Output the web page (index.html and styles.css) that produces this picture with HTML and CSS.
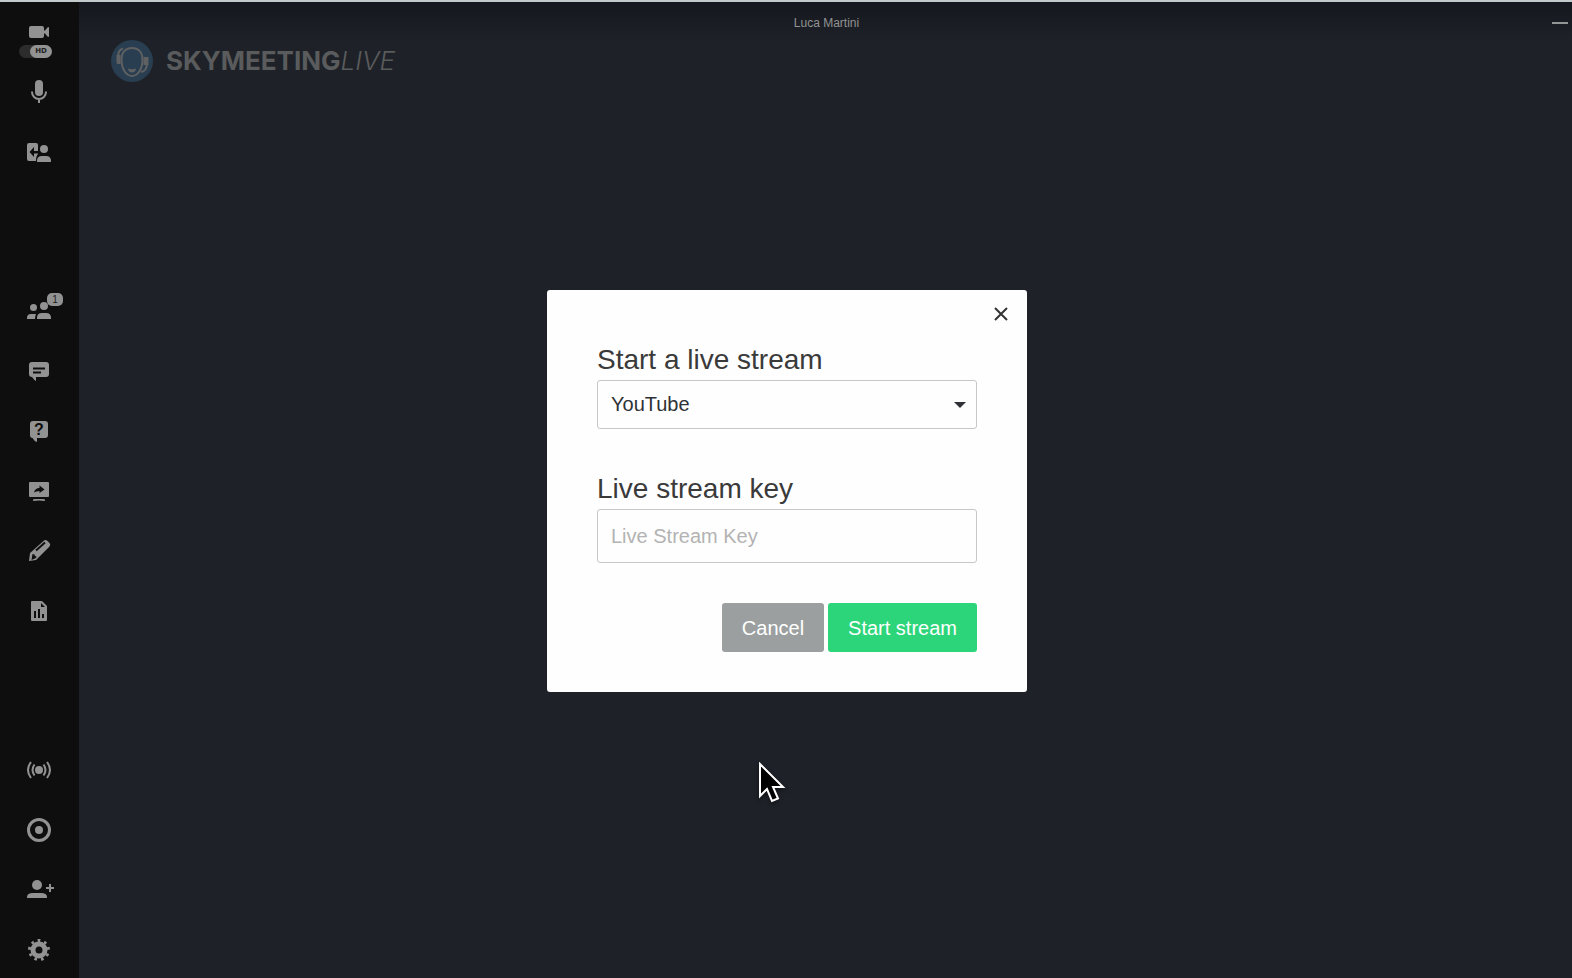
FILE: index.html
```
<!DOCTYPE html>
<html lang="en">
<head>
 <meta charset="utf-8">
 <title>SkymeetingLive</title>
 <link rel="stylesheet" href="styles.css">
</head>
<body>
 <nav class="sidebar">
  <div class="group">
   <button class="tool camera" aria-label="Camera">
    <svg width="20" height="12" viewBox="0 0 20 12"><rect width="15" height="12" rx="2"/><path d="M14 4.5h2L18.5 1.5Q20 .5 20 2v8q0 1.5-1.5.5L16 7.5h-2z"/></svg>
    <span class="hd"><span class="knob">HD</span></span>
   </button>
   <button class="tool" aria-label="Microphone">
    <svg class="icon" viewBox="0 0 30 30"><rect x="11" y="3" width="8" height="16" rx="4"/><path class="line" d="M8 14.5v.5a7 7 0 0 0 14 0v-.5M15 22v4"/></svg>
   </button>
   <button class="tool" aria-label="Leave">
    <svg class="icon" viewBox="0 0 30 30"><path d="M5 6h7q2 0 2 2v9q-2 2-2 7H5q-2 0-2-2V8q0-2 2-2z"/><path class="cut" d="M5.5 15l4.5-5v4h4v2.5h-4V20z"/><circle cx="20" cy="12" r="4"/><path d="M13 25v-1q0-5 5-5h4q5 0 5 5v1z"/></svg>
   </button>
  </div>
  <div class="group">
   <button class="tool" aria-label="Participants">
    <svg class="icon" viewBox="0 0 30 30"><circle cx="9.5" cy="11.5" r="3.5"/><circle cx="20" cy="10" r="4"/><path d="M3 23v-1q0-4 4-4h5q-1 2-1 5z"/><path d="M13 23v-1q0-5 5-5h4q5 0 5 5v1z"/></svg>
    <span class="badge">1</span>
   </button>
   <button class="tool" aria-label="Chat">
    <svg class="icon" viewBox="0 0 30 30"><path d="M8 6h14q3 0 3 3v9q0 3-3 3H12v4q-2-1-4-4-3 0-3-3V9q0-3 3-3z"/><path class="cut" d="M9 11.5h12v2H9zM9 15.5h8v2H9z"/></svg>
   </button>
   <button class="tool" aria-label="Questions">
    <svg class="icon" viewBox="0 0 30 30"><path d="M9 5h12q3 0 3 3v11q0 3-3 3h-8v4q-3-1-4.5-4Q6 22 6 19V8q0-3 3-3z"/><text class="mark" x="15" y="19">?</text></svg>
   </button>
   <button class="tool" aria-label="Share screen">
    <svg class="icon" viewBox="0 0 30 30"><rect x="5" y="6" width="20" height="15" rx="1"/><path class="cut" d="M10 16.500q1-4.500 5.500-4.500V9.500l5 4-5 3.500v-2q-3.500 0-5.500 1.500z"/><path d="M9 24q0-1 2-1h8q2 0 2 1v1q-6-1-12 0z"/></svg>
   </button>
   <button class="tool" aria-label="Draw">
    <svg class="icon" viewBox="0 0 30 30"><path d="M5 25l1-8L19.5 5q2-2 4 0l2 2q1.500 1.500 0 3.500L12 24z"/><path class="slot" d="M12 14.500l9-8"/><path class="cut" d="M8.5 18l2 .5.5 1.500 1.500.5-.5 1.500-4.500 2z"/></svg>
   </button>
   <button class="tool" aria-label="Polls">
    <svg class="icon" viewBox="0 0 30 30"><path d="M8 5h10l5 5v14q0 1-1 1H8q-1 0-1-1V6q0-1 1-1z"/><path class="cut" d="M17 7l4 4h-4zM10 15h2v7h-2zM14 13h2v9h-2zM18 18h2v4h-2z"/></svg>
   </button>
  </div>
  <div class="group">
   <button class="tool" aria-label="Live stream">
    <svg class="icon" viewBox="0 0 30 30"><circle cx="15" cy="15" r="4"/><path class="line" d="M10.5 9.5q-4 5.500 0 11M19.5 9.5q4 5.500 0 11M7 7q-6 8 0 16M23 7q6 8 0 16"/></svg>
   </button>
   <button class="tool" aria-label="Record">
    <svg class="icon" viewBox="0 0 30 30"><circle class="ring" cx="15" cy="15" r="10.5"/><circle cx="15" cy="15" r="4"/></svg>
   </button>
   <button class="tool" aria-label="Invite">
    <svg class="icon" viewBox="0 0 30 30"><circle cx="13" cy="10" r="5"/><path d="M3 23v-1q0-4 6-4h8q6 0 6 4v1z"/><path class="line" d="M22 13h8M26 9v8"/></svg>
   </button>
   <button class="tool last" aria-label="Settings">
    <svg class="icon" viewBox="0 0 30 30"><circle class="gear" cx="15" cy="16" r="6"/><circle class="teeth" cx="15" cy="16" r="9.5" pathLength="18" transform="rotate(-98 15 16)"/></svg>
   </button>
  </div>
 </nav>
 <main class="stage">
  <header class="topbar">
   <span class="name">Luca Martini</span>
   <button class="minimize" aria-label="Minimize"></button>
  </header>
  <div class="logo">
   <svg width="42" height="42" viewBox="0 0 42 42">
    <circle class="disc" cx="21" cy="21" r="21"/>
    <path class="face" d="M21 8c-7 0-10.5 5-10.5 11.5C10.5 29 15 36 21 36s10.5-7 10.5-16.5C31.5 13 28 8 21 8z"/>
    <path class="thin" d="M7 17q0-7 5-8.500M36 17v6q0 8-6 9"/>
    <path class="part" d="M5.5 15h4v9H7q-1.500 0-1.500-1.500zM32.5 17h5v8h-5zM17 28.500q4 1.500 8 0-.5 4-4 4t-4-4z"/>
   </svg>
   <span class="brand">SKYMEETING<i>LIVE</i></span>
  </div>
 </main>
 <div class="overlay">
  <form class="dialog" role="dialog" aria-label="Start a live stream" onsubmit="return false">
   <button class="close" type="button" aria-label="Close">
    <svg width="14" height="14" viewBox="0 0 14 14"><path d="M1 1l12 12M13 1L1 13"/></svg>
   </button>
   <label for="service">Start a live stream</label>
   <div class="select">
    <select id="service">
     <option>YouTube</option>
     <option>Facebook</option>
    </select>
   </div>
   <label for="key">Live stream key</label>
   <input id="key" type="text" placeholder="Live Stream Key">
   <div class="actions">
    <button class="btn" type="button">Cancel</button>
    <button class="btn start" type="submit">Start stream</button>
   </div>
  </form>
 </div>
 <!-- mouse pointer -->
 <svg class="pointer" width="28" height="42" viewBox="0 0 28 42"><path d="M2 2v32l7-7 5 12 6-2.500-5-11.500h10z"/></svg>
</body>
</html>
```
FILE: styles.css
```
* {
 box-sizing: border-box;
}
body {
 margin: 0;
 height: 100vh;
 display: flex;
 overflow: hidden;
 border-top: 2px solid #c3cacc;
 background: #1e2228;
 font-family: "Liberation Sans", Arial, sans-serif;
}
button,
input,
select {
 font: inherit;
}
button {
 border: 0;
 padding: 0;
 background: none;
}

/* sidebar */
.sidebar {
 width: 79px;
 flex: none;
 display: flex;
 flex-direction: column;
 justify-content: space-between;
 background: #0e0e0e;
}
.group {
 display: flex;
 flex-direction: column;
}
.tool {
 position: relative;
 height: 60px;
 display: flex;
 align-items: center;
 justify-content: center;
 padding-right: 1px;
 fill: #929292;
}
.tool.last {
 height: 58px;
}
.icon {
 width: 30px;
 height: 30px;
 overflow: visible;
}
.camera {
 flex-direction: column;
 gap: 7px;
 padding-top: 20px;
}
.hd {
 width: 33px;
 height: 13px;
 margin-right: 7px;
 display: flex;
 justify-content: flex-end;
 border-radius: 7px;
 background: #2c2c2d;
}
.knob {
 width: 22px;
 border-radius: 7px;
 background: #929292;
 color: #222;
 font: bold 7px/13px "DejaVu Sans", sans-serif;
}
.badge {
 position: absolute;
 left: 47px;
 top: 12px;
 width: 16px;
 height: 13px;
 border-radius: 5px;
 background: #929292;
 color: #222;
 font-size: 10px;
 line-height: 13px;
}
.line,
.ring,
.gear,
.teeth {
 fill: none;
 stroke: #929292;
 stroke-width: 2;
}
.ring {
 stroke-width: 3;
}
.gear {
 stroke-width: 5;
}
.teeth {
 stroke-width: 3;
 stroke-dasharray: .8 1.2;
}
.cut {
 fill: #0e0e0e;
}
.slot {
 stroke: #0e0e0e;
 stroke-width: 2;
}
.mark {
 fill: #0e0e0e;
 font: bold 16px "Liberation Sans", sans-serif;
 text-anchor: middle;
}

/* stage */
.stage {
 flex: 1;
}
.topbar {
 height: 38px;
 display: grid;
 grid-template-columns: 1fr auto 1fr;
 align-items: center;
 padding: 4px 4px 0 6px;
 background: linear-gradient(#14171d, #1e2228);
}
.name {
 grid-column: 2;
 color: #929292;
 font-size: 12px;
}
.minimize {
 justify-self: end;
 width: 16px;
 height: 2px;
 background: #929696;
}
.logo {
 display: flex;
 align-items: center;
 gap: 13px;
 padding-left: 32px;
}
.disc {
 fill: #293e51;
}
.face,
.thin {
 fill: none;
 stroke: #5e6061;
 stroke-width: 2;
}
.part {
 fill: #5e6061;
}
.brand {
 color: #5a5b5c;
 font: 700 26px/42px Inter, sans-serif;
}
.brand i {
 font-weight: 300;
}

/* dialog */
.overlay {
 position: fixed;
 inset: 2px 0 0;
 display: flex;
 align-items: center;
 justify-content: center;
 padding: 2px 0 0 2px;
}
.dialog {
 position: relative;
 width: 480px;
 padding: 50px 50px 40px;
 display: flex;
 flex-direction: column;
 border-radius: 3px;
 background: #fefefe;
 font-size: 20px;
}
.close {
 position: absolute;
 right: 14px;
 top: 12px;
 width: 24px;
 height: 24px;
 display: grid;
 place-items: center;
 stroke: #333;
 stroke-width: 2;
}
label {
 color: #3a3a3a;
 font-size: 28px;
 line-height: 40px;
}
.select {
 position: relative;
 display: flex;
 margin-bottom: 40px;
}
.select::after {
 content: "";
 position: absolute;
 right: 11px;
 top: 22px;
 border: 6px solid transparent;
 border-top-color: #2f3136;
 border-bottom: 0;
 pointer-events: none;
}
select,
input {
 width: 100%;
 height: 49px;
 padding: 0 13px;
 appearance: none;
 border: 1px solid #c6c7c8;
 border-radius: 3px;
 background: #fefefe;
 color: #2f3136;
}
select {
 padding-bottom: 2px;
}
input {
 height: 54px;
}
input::placeholder {
 color: #b3b3b3;
}
.actions {
 display: flex;
 justify-content: flex-end;
 gap: 4px;
 margin-top: 40px;
}
.btn {
 height: 49px;
 padding: 2px 20px 0;
 border-radius: 3px;
 background: #9b9fa0;
 color: #fff;
}
.start {
 background: #2dd57a;
}
.pointer {
 position: fixed;
 left: 758px;
 top: 762px;
 fill: #000;
 stroke: #fff;
 stroke-width: 2;
 filter: drop-shadow(0 2px 2px #0008);
}
```
